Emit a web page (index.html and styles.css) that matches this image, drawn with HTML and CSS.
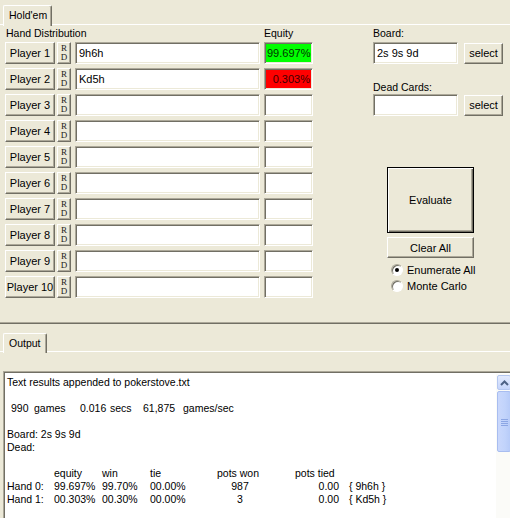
FILE: index.html
```html
<!DOCTYPE html>
<html>
<head>
<meta charset="utf-8">
<link rel="stylesheet" href="styles.css">
</head>
<body>
<div class="app">
  <section class="top">
    <div class="tabstrip tabstrip-top">
      <div class="tab">Hold'em</div>
    </div>
    <div class="main">
      <div class="hands">
        <div class="lbl lbl-dist">Hand Distribution</div>
        <div class="lbl lbl-eq">Equity</div>

        <button class="btn pbtn">Player 1</button><button class="btn rd"><span>R</span><span>D</span></button><div class="field">9h6h</div><div class="eq eq-win">99.697%</div>
        <button class="btn pbtn">Player 2</button><button class="btn rd"><span>R</span><span>D</span></button><div class="field">Kd5h</div><div class="eq eq-lose">0.303%</div>
        <button class="btn pbtn">Player 3</button><button class="btn rd"><span>R</span><span>D</span></button><div class="field"></div><div class="eq"></div>
        <button class="btn pbtn">Player 4</button><button class="btn rd"><span>R</span><span>D</span></button><div class="field"></div><div class="eq"></div>
        <button class="btn pbtn">Player 5</button><button class="btn rd"><span>R</span><span>D</span></button><div class="field"></div><div class="eq"></div>
        <button class="btn pbtn">Player 6</button><button class="btn rd"><span>R</span><span>D</span></button><div class="field"></div><div class="eq"></div>
        <button class="btn pbtn">Player 7</button><button class="btn rd"><span>R</span><span>D</span></button><div class="field"></div><div class="eq"></div>
        <button class="btn pbtn">Player 8</button><button class="btn rd"><span>R</span><span>D</span></button><div class="field"></div><div class="eq"></div>
        <button class="btn pbtn">Player 9</button><button class="btn rd"><span>R</span><span>D</span></button><div class="field"></div><div class="eq"></div>
        <button class="btn pbtn">Player 10</button><button class="btn rd"><span>R</span><span>D</span></button><div class="field"></div><div class="eq"></div>
      </div>

      <div class="side">
        <div class="lbl lbl-board">Board:</div>
        <div class="cardrow">
          <div class="field cards">2s 9s 9d</div>
          <button class="btn sel">select</button>
        </div>
        <div class="lbl lbl-dead">Dead Cards:</div>
        <div class="cardrow">
          <div class="field cards"></div>
          <button class="btn sel">select</button>
        </div>
        <button class="btn eval">Evaluate</button>
        <button class="btn clear">Clear All</button>
        <div class="radios">
          <div class="radio-row"><span class="radio on"></span><span>Enumerate All</span></div>
          <div class="radio-row"><span class="radio"></span><span>Monte Carlo</span></div>
        </div>
      </div>
    </div>
  </section>

  <section class="bottom">
    <div class="tabstrip tabstrip-out">
      <div class="tab tab-out">Output</div>
    </div>
    <div class="outbox">
      <div class="text">
        <div class="line">Text results appended to pokerstove.txt</div>
        <div class="line"></div>
        <div class="line stats">
          <span class="s1">990</span><span class="s2">games</span><span class="s3">0.016</span><span class="s4">secs</span><span class="s5">61,875</span><span>games/sec</span>
        </div>
        <div class="line"></div>
        <div class="line">Board: 2s 9s 9d</div>
        <div class="line">Dead:</div>
        <div class="line"></div>
        <div class="results">
          <span></span><span>equity</span><span>win</span><span>tie</span><span>pots won</span><span>pots tied</span><span></span>
          <span>Hand 0:</span><span>99.697%</span><span>99.70%</span><span>00.00%</span><span class="num won">987</span><span class="num tied">0.00</span><span>{ 9h6h }</span>
          <span>Hand 1:</span><span>00.303%</span><span>00.30%</span><span>00.00%</span><span class="num won">3</span><span class="num tied">0.00</span><span>{ Kd5h }</span>
        </div>
      </div>
      <div class="vscroll">
        <div class="sb-btn">
          <svg width="9" height="6" viewBox="0 0 9 6"><path d="M1 5 L4.5 1.5 L8 5" fill="none" stroke="#4d6185" stroke-width="2"/></svg>
        </div>
        <div class="sb-thumb">
          <svg width="7" height="8" viewBox="0 0 7 8"><path d="M0 1.5H7M0 3.5H7M0 5.5H7M0 7.5H7" stroke="#8ca6e4" stroke-width="1"/></svg>
        </div>
        <div class="sb-track"></div>
      </div>
    </div>
  </section>
</div>
</body>
</html>
```

FILE: styles.css
```css
* { box-sizing: border-box; }

html, body {
  margin: 0;
  padding: 0;
}

body {
  width: 510px;
  height: 518px;
  overflow: hidden;
  background: #ece9d8;
  font-family: "Liberation Sans", Arial, sans-serif;
  font-size: 10.5px;
  color: #000;
}

.app {
  display: flex;
  flex-direction: column;
  height: 518px;
}

/* ---------- tabs ---------- */
.tabstrip {
  display: flex;
  padding-left: 3px;
  border-bottom: 1px solid #fff;
}

.tabstrip-top {
  padding-top: 4px;
  height: 25px;
}

.tab {
  height: 21px;
  padding: 0 5px;
  line-height: 19px;
  border-top: 1px solid #fff;
  border-left: 1px solid #fff;
  border-right: 1px solid #716f64;
  box-shadow: inset -1px 0 #aca899;
  border-radius: 2px 2px 0 0;
  width: 49px;
  position: relative;
  top: 1px;
  background: #ece9d8;
}

.tab-out {
  width: 44px;
  height: 20px;
}

/* ---------- top panel ---------- */
.top {
  height: 323px;
  border-bottom: 1px solid #aca899;
}

.main {
  display: flex;
  padding-left: 5px;
  padding-top: 1px;
}

.hands {
  display: grid;
  grid-template-columns: 52px 18px 189px 49px;
  grid-template-rows: 12px;
  grid-auto-rows: 22px;
  row-gap: 4px;
  align-items: start;
}

.lbl {
  line-height: 14px;
  white-space: nowrap;
}

.lbl-dist {
  grid-column: 1 / 4;
  padding-left: 1px;
  height: 12px;
}

.lbl-eq {
  grid-column: 4;
  height: 12px;
}

.btn {
  font: inherit;
  color: #000;
  background: #ece9d8;
  border: 1px solid;
  border-color: #fff #716f64 #716f64 #fff;
  box-shadow: inset -1px -1px #aca899;
  padding: 0;
  margin: 0;
  border-radius: 0;
  text-align: center;
}

.pbtn {
  width: 50px;
  height: 22px;
  line-height: 18px;
  font-size: 11px;
}

.rd {
  width: 14px;
  height: 22px;
  display: flex;
  flex-direction: column;
  align-items: center;
  justify-content: center;
  font-family: "Liberation Serif", "Times New Roman", serif;
  font-size: 9px;
  line-height: 9px;
  color: #222;
}

.field {
  width: 185px;
  height: 22px;
  background: #fff;
  border: 1px solid;
  border-color: #aca899 #fff #fff #aca899;
  box-shadow: inset 1px 1px #716f64, inset -1px -1px #ece9d8;
  padding: 3px 3px 0 3px;
  line-height: 15px;
  font-size: 11px;
  white-space: nowrap;
}

.eq {
  width: 49px;
  height: 22px;
  background: #fff;
  border: 1px solid;
  border-color: #aca899 #fff #fff #aca899;
  box-shadow: inset 1px 1px #716f64, inset -1px -1px #ece9d8;
  text-align: right;
  padding: 3px 2px 0 2px;
  line-height: 15px;
  font-size: 11px;
}

.eq-win { background: #00ff00; color: #003300; }
.eq-lose { background: #ff0000; color: #400000; }

/* ---------- right side ---------- */
.side {
  margin-left: 60px;
  width: 131px;
  display: flex;
  flex-direction: column;
  align-items: flex-start;
}

.lbl-board {
  height: 16px;
}

.cardrow {
  display: flex;
  align-items: flex-start;
  gap: 6px;
}

.field.cards {
  width: 85px;
  height: 22px;
}

.sel {
  width: 39px;
  height: 21px;
  margin-top: 1px;
  line-height: 17px;
  font-size: 11px;
}

.lbl-dead {
  margin-top: 17px;
  height: 13px;
  line-height: 13px;
}

.eval {
  margin-top: 51px;
  margin-left: 14px;
  width: 87px;
  height: 66px;
  border: 1px solid #000;
  box-shadow: inset 1px 1px #fff, inset -1px -1px #716f64, inset -2px -2px #aca899;
  font-size: 11px;
}

.clear {
  margin-top: 4px;
  margin-left: 14px;
  width: 87px;
  height: 21px;
  font-size: 11px;
}

.radios {
  margin-top: 4px;
  margin-left: 18px;
  display: flex;
  flex-direction: column;
}

.radio-row {
  display: flex;
  align-items: center;
  gap: 4px;
  height: 16px;
  font-size: 11px;
}

.radio {
  width: 12px;
  height: 12px;
  border-radius: 50%;
  background: #fff;
  border: 1px solid;
  border-color: #aca899 #fff #fff #aca899;
  box-shadow: inset 1px 1px #716f64;
  display: flex;
  align-items: center;
  justify-content: center;
}

.radio.on::after {
  content: "";
  width: 4px;
  height: 4px;
  border-radius: 50%;
  background: #000;
}

/* ---------- bottom ---------- */
.bottom {
  flex: 1;
  border-top: 1px solid #716f64;
  display: flex;
  flex-direction: column;
}

.tabstrip-out {
  padding-top: 8px;
  height: 28px;
}

.outbox {
  margin-top: 19px;
  margin-left: 3px;
  width: 509px;
  flex: 1;
  background: #fff;
  border-top: 1px solid #aca899;
  border-left: 1px solid #aca899;
  box-shadow: inset 1px 1px #716f64;
  display: flex;
}

.text {
  flex: 1;
  padding: 4px 0 0 3px;
  line-height: 13px;
  font-size: 10.5px;
  white-space: nowrap;
}

.line { height: 13px; }

.stats { display: flex; }
.stats .s1 { width: 27px; padding-left: 4px; }
.stats .s2 { width: 46px; }
.stats .s3 { width: 30px; }
.stats .s4 { width: 33px; }
.stats .s5 { width: 40px; }

.results {
  display: grid;
  grid-template-columns: 47px 48px 48px 67px 78px 54px auto;
  grid-auto-rows: 13px;
}

.results .won { width: 46px; text-align: center; }
.results .tied { width: 44px; text-align: right; }

.vscroll {
  width: 16px;
  margin-top: 2px;
  background: #fbfbf8;
  display: flex;
  flex-direction: column;
  padding: 1px 1px 0 1px;
}

.sb-btn {
  height: 15px;
  border: 1px solid #b5c7f0;
  border-radius: 2px;
  background: linear-gradient(#e3ebfe, #c6d5fb);
  display: flex;
  align-items: center;
  justify-content: center;
}

.sb-thumb {
  margin-top: 1px;
  height: 61px;
  border: 1px solid #a8bdf0;
  border-radius: 2px;
  background: linear-gradient(90deg, #cad8fc, #c1d3fb 60%, #b7cbf8);
  display: flex;
  align-items: center;
  justify-content: center;
}

.sb-track { flex: 1; }
```
